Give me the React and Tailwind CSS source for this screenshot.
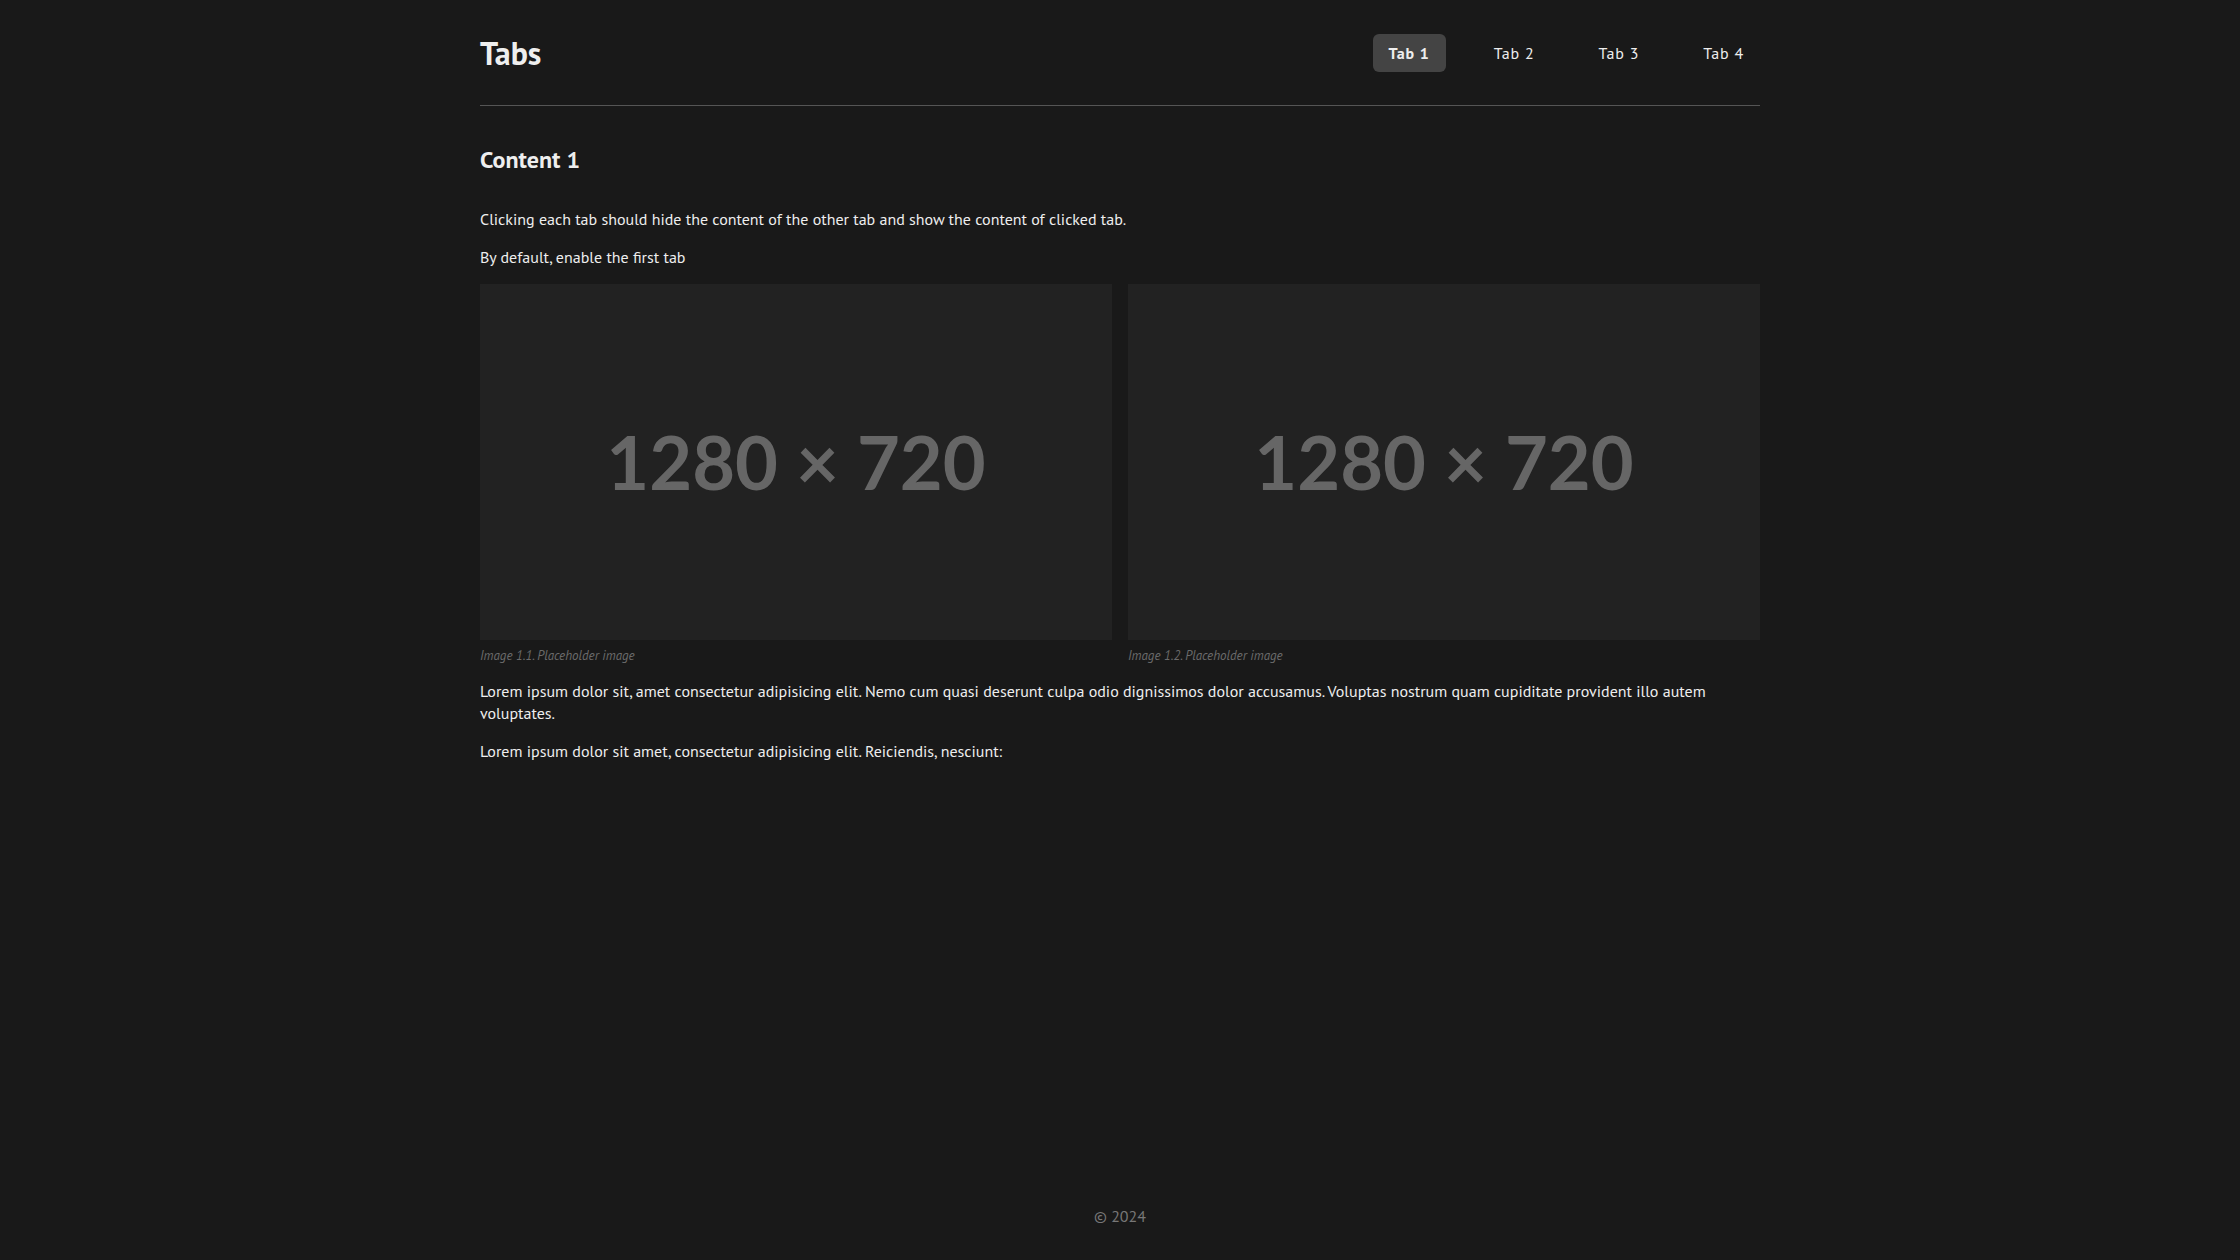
const tabs = ["Tab 1", "Tab 2", "Tab 3", "Tab 4"];

function Placeholder({ caption }) {
  return (
    <figure className="flex flex-col">
      <div className="flex h-[356px] items-center justify-center bg-[#222222]">
        <span className="font-['Lato',sans-serif] text-[74px] font-bold leading-none text-[#666666]">
          1280 × 720
        </span>
      </div>
      <figcaption className="mt-2 text-[13px] italic leading-4 text-[#6b6b6b]">{caption}</figcaption>
    </figure>
  );
}

export default function App() {
  return (
    <div className="flex min-h-screen flex-col bg-[#191919] font-['PT_Sans',sans-serif] text-[#eeeeee]">
      <main className="mx-auto w-[1280px] flex-1">
        <header className="flex h-[106px] items-center justify-between border-b border-[#555555]">
          <h1 className="text-[32px] font-bold leading-none">Tabs</h1>
          <nav className="flex gap-8">
            {tabs.map((t, i) => (
              <button
                key={t}
                className={
                  i === 0
                    ? "h-[38px] rounded-md bg-[#444444] px-4 text-[16px] font-bold tracking-[0.05em]"
                    : "h-[38px] rounded-md px-4 text-[16px] tracking-[0.05em]"
                }
              >
                {t}
              </button>
            ))}
          </nav>
        </header>

        <section className="pt-[38px]">
          <h2 className="mb-8 text-[24px] font-bold leading-8">Content 1</h2>
          <p className="mb-4 text-[16px] leading-[22px]">
            Clicking each tab should hide the content of the other tab and show the content of clicked tab.
          </p>
          <p className="mb-4 text-[16px] leading-[22px]">By default, enable the first tab</p>
          <div className="mb-4 grid grid-cols-2 gap-4">
            <Placeholder caption="Image 1.1. Placeholder image" />
            <Placeholder caption="Image 1.2. Placeholder image" />
          </div>
          <p className="mb-4 text-[16px] leading-[22px]">
            Lorem ipsum dolor sit, amet consectetur adipisicing elit. Nemo cum quasi deserunt culpa odio dignissimos dolor
            accusamus. Voluptas nostrum quam cupiditate provident illo autem voluptates.
          </p>
          <p className="mb-4 text-[16px] leading-[22px]">
            Lorem ipsum dolor sit amet, consectetur adipisicing elit. Reiciendis, nesciunt:
          </p>
        </section>
      </main>

      <footer className="py-8 text-center text-[16px] leading-6 text-[#777777]">© 2024</footer>
    </div>
  );
}
